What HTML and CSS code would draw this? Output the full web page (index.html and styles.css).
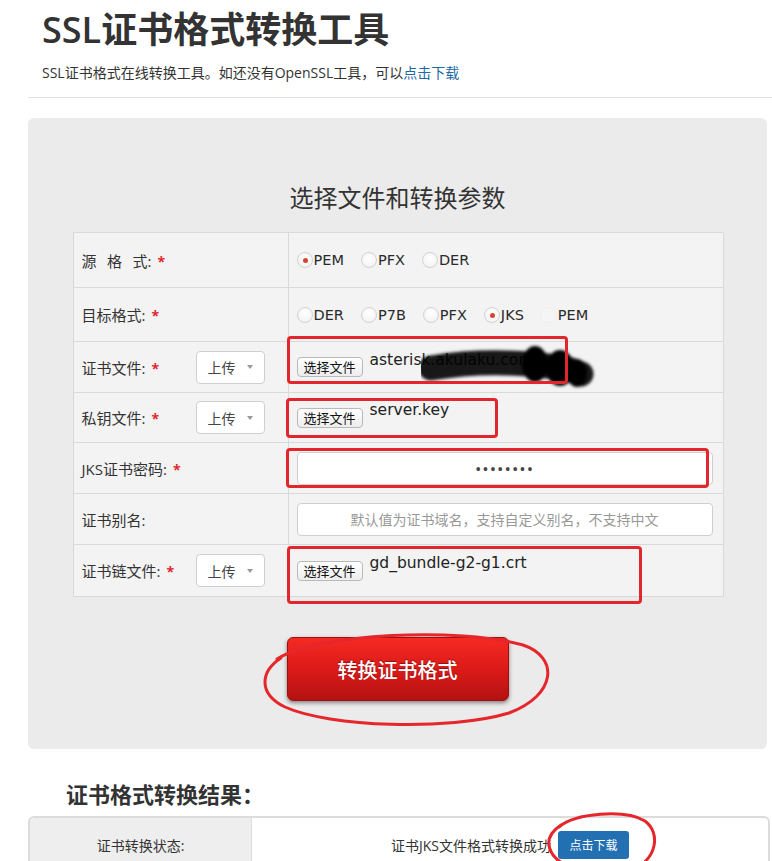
FILE: index.html
```html
<!DOCTYPE html>
<html lang="zh-CN">
<head>
<meta charset="utf-8">
<title>SSL证书格式转换工具</title>
<link rel="stylesheet" href="styles.css">
</head>
<body>
<div class="page">
  <header class="head">
    <h1 class="title">SSL证书格式转换工具</h1>
    <p class="sub">SSL证书格式在线转换工具。如还没有OpenSSL工具，可以<a class="link" href="#">点击下载</a></p>
  </header>
  <hr class="rule">

  <section class="panel">
    <h2 class="panel-title">选择文件和转换参数</h2>
    <div class="form">
      <div class="cell label-cell"><span class="lbl"><span class="spread">源格</span>式:<i class="req">*</i></span></div>
      <div class="cell value-cell">
        <span class="radio"><span class="dot on"></span>PEM</span>
        <span class="radio"><span class="dot"></span>PFX</span>
        <span class="radio"><span class="dot"></span>DER</span>
      </div>

      <div class="cell label-cell"><span class="lbl">目标格式:<i class="req">*</i></span></div>
      <div class="cell value-cell">
        <span class="radio"><span class="dot"></span>DER</span>
        <span class="radio"><span class="dot"></span>P7B</span>
        <span class="radio"><span class="dot"></span>PFX</span>
        <span class="radio"><span class="dot on"></span>JKS</span>
        <span class="radio radio-pem"><span class="dot faint"></span>PEM</span>
      </div>

      <div class="cell label-cell"><span class="lbl fixed">证书文件:<i class="req">*</i></span><span class="select">上传<span class="caret"></span></span></div>
      <div class="cell value-cell mark-host">
        <span class="file-btn">选择文件</span><span class="file-name">asterisk.akulaku.com</span>
        <svg class="scribble" width="176" height="52" viewBox="0 0 176 52">
          <defs><filter id="soft" x="-10%" y="-20%" width="120%" height="140%"><feGaussianBlur stdDeviation="1.8"/></filter></defs>
          <g filter="url(#soft)">
            <path d="M10 25 C 40 20, 80 18, 118 22 S 150 28, 160 31" stroke="#000" stroke-width="25" stroke-linecap="round" fill="none" opacity="0.9"/>
            <ellipse cx="114" cy="21" rx="13" ry="18" fill="#000"/>
            <ellipse cx="139" cy="25" rx="14" ry="18" fill="#000"/>
            <ellipse cx="156" cy="30" rx="10" ry="14" fill="#000"/>
          </g>
        </svg>
        <span class="mark mark-1"></span>
      </div>

      <div class="cell label-cell"><span class="lbl fixed">私钥文件:<i class="req">*</i></span><span class="select">上传<span class="caret"></span></span></div>
      <div class="cell value-cell mark-host">
        <span class="file-btn">选择文件</span><span class="file-name">server.key</span>
        <span class="mark mark-2"></span>
      </div>

      <div class="cell label-cell"><span class="lbl">JKS证书密码:<i class="req">*</i></span></div>
      <div class="cell value-cell mark-host">
        <div class="input pw">••••••••</div>
        <span class="mark mark-3"></span>
      </div>

      <div class="cell label-cell"><span class="lbl">证书别名:</span></div>
      <div class="cell value-cell">
        <div class="input placeholder">默认值为证书域名，支持自定义别名，不支持中文</div>
      </div>

      <div class="cell label-cell"><span class="lbl fixed">证书链文件:<i class="req">*</i></span><span class="select">上传<span class="caret"></span></span></div>
      <div class="cell value-cell mark-host">
        <span class="file-btn">选择文件</span><span class="file-name">gd_bundle-g2-g1.crt</span>
        <span class="mark mark-4"></span>
      </div>
    </div>

    <div class="submit">
      <button class="convert" type="button">转换证书格式</button>
      <svg class="ring ring-big" width="296" height="100" viewBox="0 0 296 100">
        <path d="M18 32 C 60 6, 200 0, 264 18 C 300 30, 298 68, 250 86 C 190 104, 70 100, 26 80 C -2 66, 2 44, 22 31" fill="none" stroke="#e5262b" stroke-width="3" stroke-linecap="round"/>
      </svg>
    </div>
  </section>

  <h3 class="result-title">证书格式转换结果：</h3>
  <div class="result">
    <div class="result-label">证书转换状态:</div>
    <div class="result-value">
      <span>证书JKS文件格式转换成功</span><a class="dl" href="#">点击下载</a>
      <svg class="ring ring-small" width="116" height="66" viewBox="0 0 116 66">
        <path d="M14 18 C 30 4, 80 0, 100 12 C 116 24, 112 50, 88 60 C 60 70, 20 62, 8 46 C 0 34, 4 24, 16 16" fill="none" stroke="#e5262b" stroke-width="3" stroke-linecap="round"/>
      </svg>
    </div>
  </div>
</div>
</body>
</html>
```

FILE: styles.css
```css
* { box-sizing: border-box; }

html, body {
  margin: 0;
  padding: 0;
  background: #fff;
}

body {
  font-family: "Open Sans", "Noto Sans CJK SC", sans-serif;
  color: #333;
}

.page {
  width: 772px;
  padding-left: 28px;
  overflow: hidden;
}

.head {
  padding-left: 14px;
}

.title {
  margin: 8px 0 0;
  font-size: 36px;
  line-height: 44px;
  font-weight: 600;
  color: #333;
}

.sub {
  margin: 11px 0 0;
  font-size: 14px;
  line-height: 20px;
  color: #333;
}

.link {
  color: #1f6aa5;
  text-decoration: none;
}

.rule {
  margin: 14px 0 20px;
  border: 0;
  border-top: 1px solid #e3e3e3;
  height: 0;
}

.panel {
  width: 739px;
  background: #ebebeb;
  border-radius: 6px;
  padding: 64px 0 48px;
}

.panel-title {
  margin: 0 0 18px;
  text-align: center;
  font-size: 24px;
  line-height: 32px;
  font-weight: 400;
  color: #333;
}

.form {
  width: 650px;
  margin: 0 auto;
  display: grid;
  grid-template-columns: 215px 435px;
  grid-template-rows: 55px 54px 51px 50px 51px 51px 52px;
  border-top: 1px solid #d9d9d9;
  border-left: 1px solid #d9d9d9;
  background: #f3f3f3;
}

.cell {
  border-right: 1px solid #d9d9d9;
  border-bottom: 1px solid #d9d9d9;
  padding-left: 8px;
  display: flex;
  align-items: center;
}

.lbl {
  font-size: 15px;
  color: #333;
  white-space: nowrap;
}

.lbl.fixed {
  width: 114px;
  flex: none;
}

.spread {
  letter-spacing: 10.5px;
}

.req {
  font-style: normal;
  color: #e0282c;
  font-size: 14px;
  margin-left: 6px;
  font-weight: 700;
}

.select {
  width: 69px;
  height: 33px;
  background: #fff;
  border: 1px solid #cfcfcf;
  border-radius: 4px;
  display: flex;
  align-items: center;
  padding-left: 11px;
  font-size: 14px;
  color: #444;
}

.caret {
  width: 0;
  height: 0;
  border-left: 3px solid transparent;
  border-right: 3px solid transparent;
  border-top: 4px solid #999;
  margin-left: 11px;
}

.radio {
  display: inline-flex;
  align-items: center;
  font-family: "DejaVu Sans", "Noto Sans CJK SC", sans-serif;
  font-size: 14.5px;
  color: #2a2a2a;
  margin-right: 17px;
}

.radio-pem {
  margin-left: -1px;
}

.radio-pem .dot {
  margin-right: 2px;
}

.dot {
  width: 16px;
  height: 16px;
  border-radius: 50%;
  border: 1px solid #d2d2d2;
  background: radial-gradient(circle at 50% 40%, #fff 0%, #f4f4f4 70%, #e9e9e9 100%);
  margin-right: 1px;
  position: relative;
  flex: none;
}

.dot.on::after {
  content: "";
  position: absolute;
  left: 5px;
  top: 5px;
  width: 5px;
  height: 5px;
  border-radius: 50%;
  background: #d8452e;
}

.dot.faint {
  border-color: #f0f0f0;
  background: #f5f5f5;
}

.mark-host {
  position: relative;
}

.file-btn {
  height: 20px;
  padding: 0 6px;
  border: 1px solid #b9b9b9;
  border-radius: 4px;
  background: linear-gradient(#ffffff, #ededed);
  font-size: 13px;
  line-height: 18px;
  color: #111;
  flex: none;
}

.file-name {
  margin-left: 7px;
  margin-top: -15px;
  font-family: "DejaVu Sans", sans-serif;
  font-size: 15.5px;
  line-height: 20px;
  color: #222;
  white-space: nowrap;
}

.input {
  width: 416px;
  height: 33px;
  background: #fff;
  border: 1px solid #cfcfcf;
  border-radius: 4px;
  display: flex;
  align-items: center;
  justify-content: center;
}

.pw {
  font-size: 17px;
  letter-spacing: 1px;
  color: #444;
}

.placeholder {
  font-size: 14px;
  color: #999;
}

.mark {
  position: absolute;
  border: 3px solid #e2262b;
  border-radius: 4px;
  pointer-events: none;
}

.mark-1 { left: -2px; top: -6px; width: 281px; height: 48px; }
.mark-2 { left: -3px; top: 5px; width: 212px; height: 40px; }
.mark-3 { left: -3px; top: 5px; width: 423px; height: 40px; }
.mark-4 { left: -2px; top: 1px; width: 355px; height: 58px; }

.scribble {
  position: absolute;
  left: 132px;
  top: 1px;
}

.submit {
  position: relative;
  margin-top: 40px;
  display: flex;
  justify-content: center;
}

.convert {
  width: 222px;
  height: 64px;
  border: 1px solid #a10e0e;
  border-radius: 6px;
  background: linear-gradient(#f52a23 0%, #dc1a18 50%, #b31212 100%);
  box-shadow: 0 2px 4px rgba(0, 0, 0, 0.45);
  color: #fff;
  font-family: "Noto Sans CJK SC", sans-serif;
  font-size: 20px;
  font-weight: 500;
  text-shadow: 0 -1px 1px rgba(0, 0, 0, 0.4);
  padding: 0;
}

.ring {
  position: absolute;
  pointer-events: none;
}

.ring-big {
  left: 231px;
  top: -10px;
}

.result-title {
  margin: 30px 0 7px 38px;
  font-size: 22px;
  line-height: 30px;
  font-weight: 700;
  color: #333;
}

.result {
  width: 742px;
  height: 56px;
  display: flex;
  border: 2px solid #dcdcdc;
  border-bottom: 0;
  border-radius: 6px 6px 0 0;
}

.result-label {
  width: 222px;
  background: #eee;
  border-right: 1px solid #dcdcdc;
  border-top-left-radius: 4px;
  display: flex;
  align-items: center;
  justify-content: center;
  font-size: 14px;
  color: #333;
}

.result-value {
  position: relative;
  flex: 1;
  display: flex;
  align-items: center;
  justify-content: center;
  font-size: 14px;
  color: #333;
}

.dl {
  margin-left: 7px;
  width: 71px;
  height: 28px;
  border-radius: 3px;
  background: #2270b2;
  color: #fff;
  font-size: 12px;
  display: flex;
  align-items: center;
  justify-content: center;
  text-decoration: none;
}

.ring-small {
  left: 293px;
  top: -9px;
}
```
